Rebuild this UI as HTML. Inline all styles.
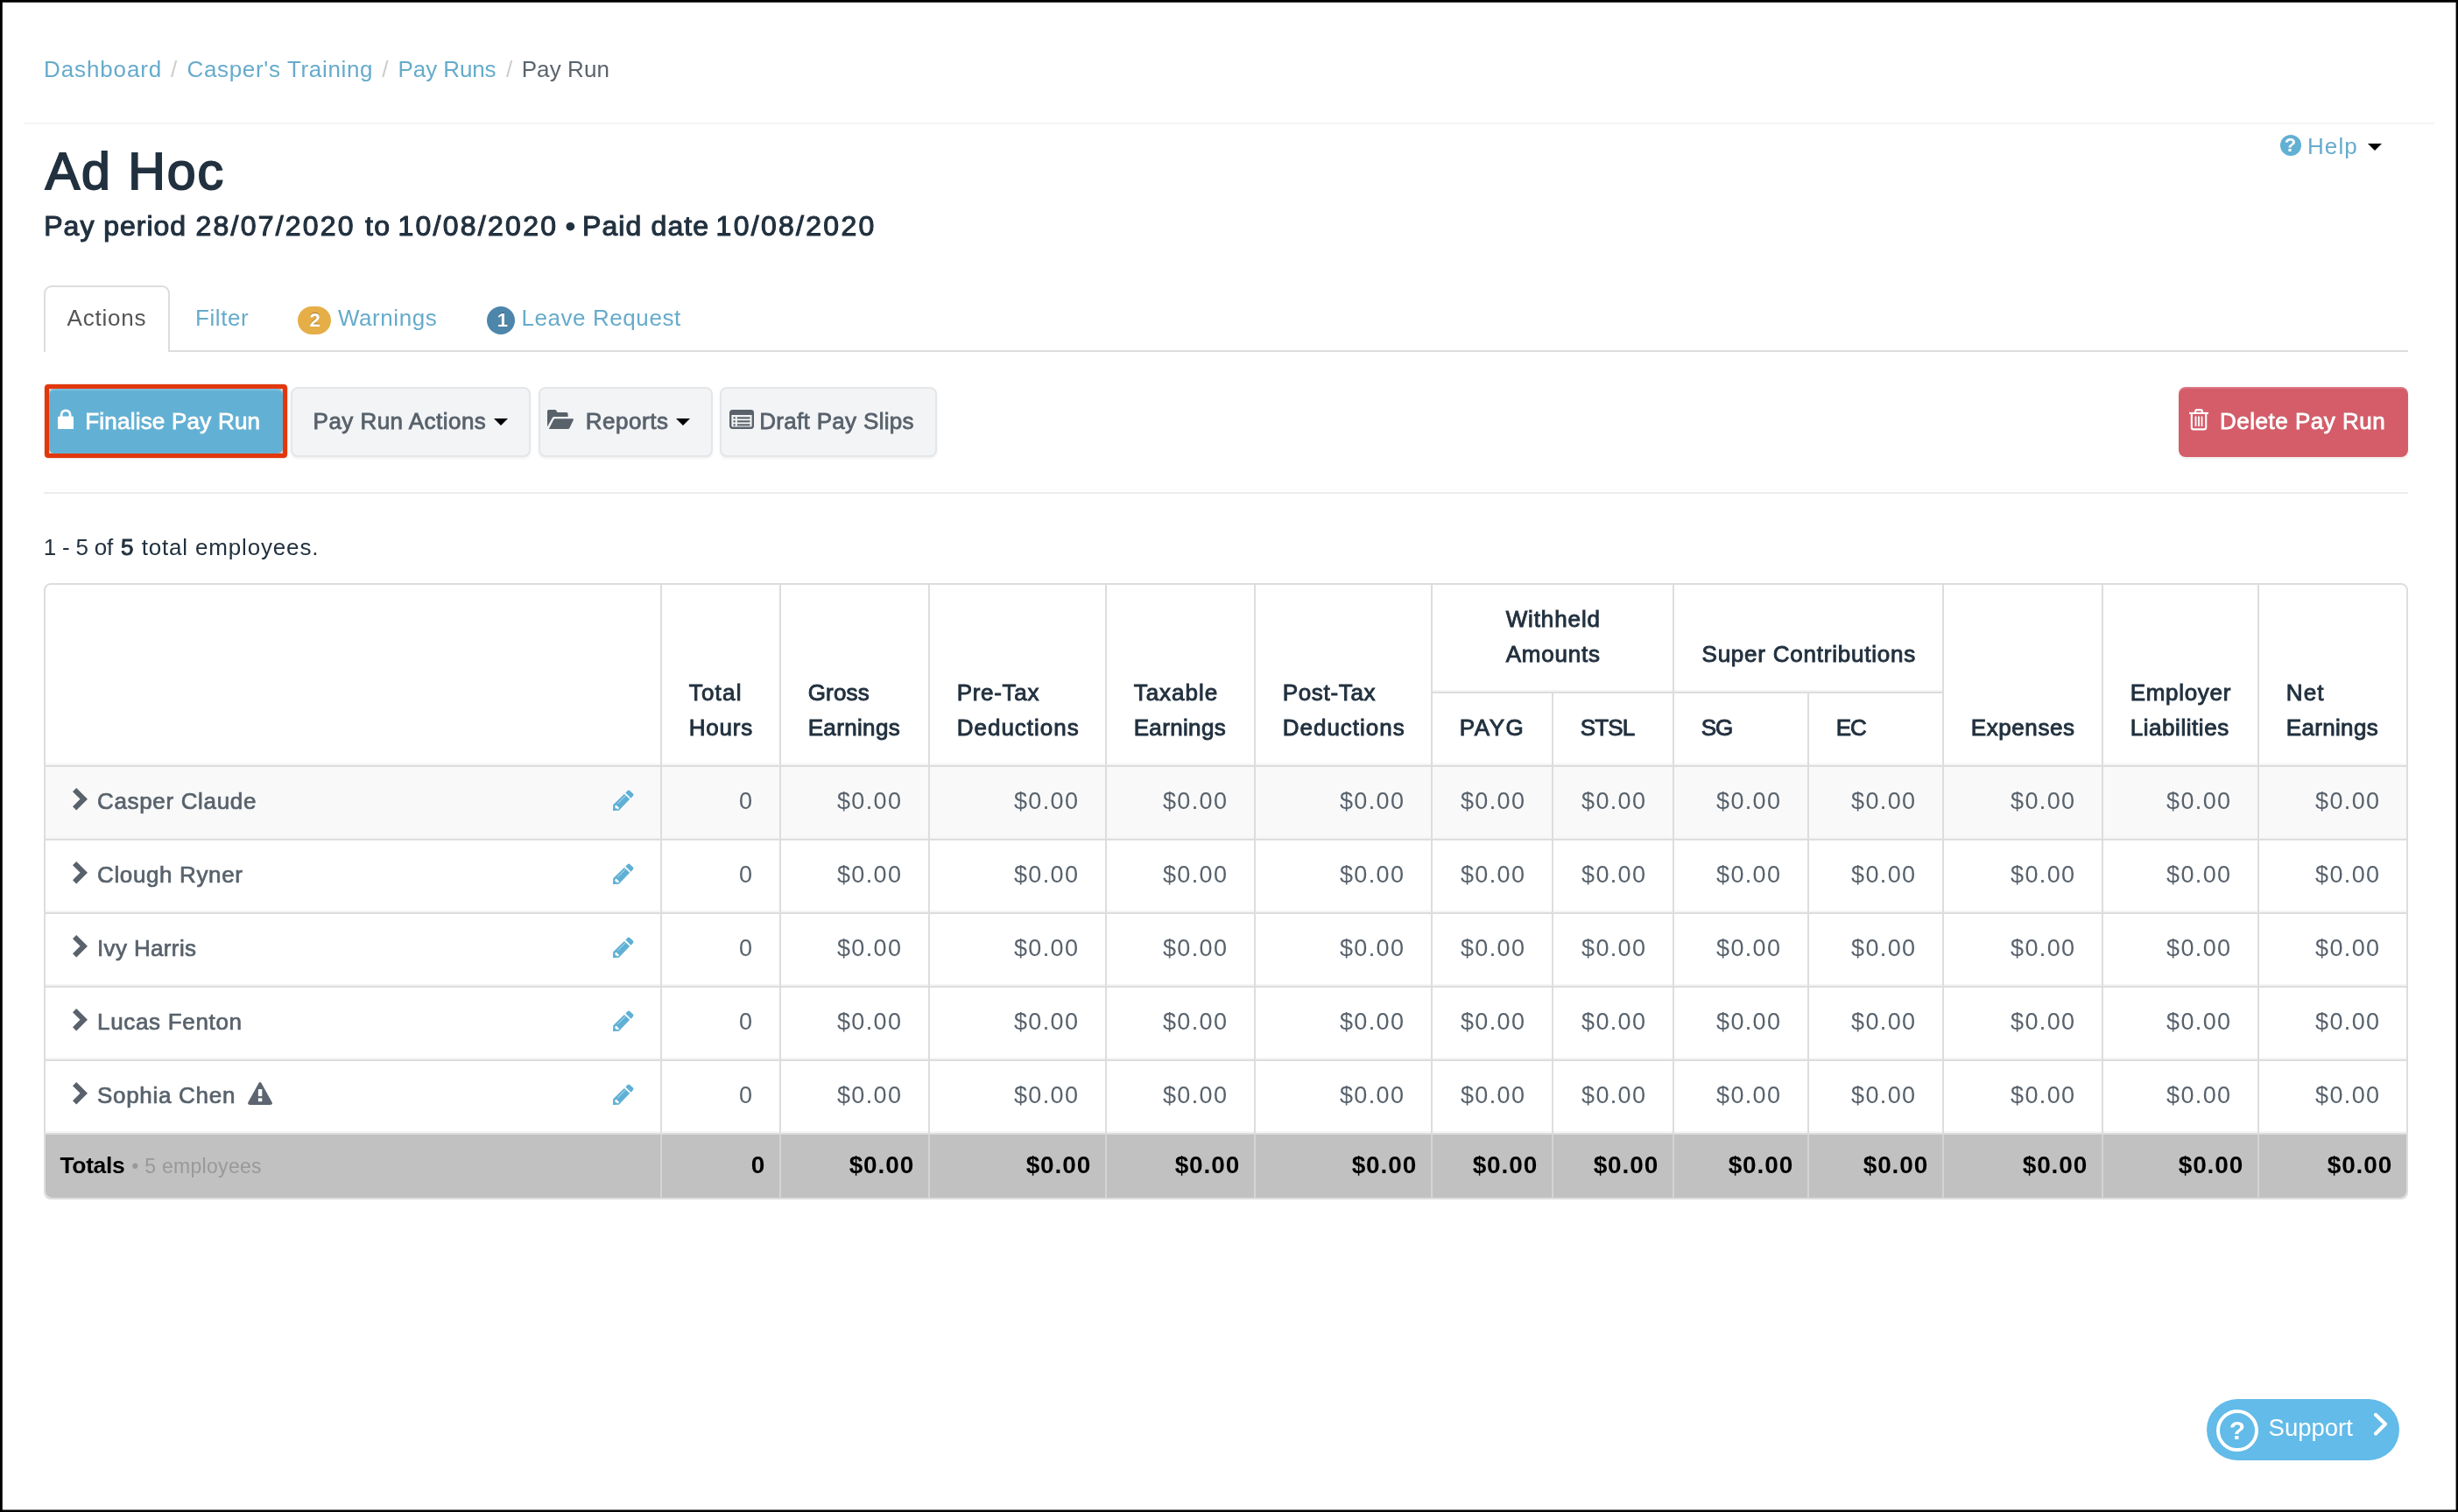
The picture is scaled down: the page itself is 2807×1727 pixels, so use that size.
<!DOCTYPE html>
<html lang="en">
<head>
<meta charset="utf-8">
<title>Pay Run - Ad Hoc</title>
<style>
*{box-sizing:border-box}
html,body{margin:0;padding:0}
body{width:2807px;height:1727px;overflow:hidden;background:#fff;position:relative;will-change:transform;
  font-family:"Liberation Sans",sans-serif;font-size:27px;line-height:40px;color:#58626c}
.frame{position:absolute;left:0;top:0;z-index:50}
a,.lk{color:#66abcb;text-decoration:none}
ul{list-style:none;margin:0;padding:0}
.abs{position:absolute;white-space:nowrap}
/* text classes */
.t{font-size:26px}
.sb{font-size:26px;-webkit-text-stroke:0.9px currentColor}
.b{font-size:26.5px;font-weight:bold}
.h1{font-size:59px;-webkit-text-stroke:1.9px currentColor}
.h2{font-size:32px;-webkit-text-stroke:1.1px currentColor}
.sm{font-size:23px}
.num{font-size:27px}
.bn{font-size:28px;font-weight:bold}
.bt{font-size:26px;-webkit-text-stroke:0.8px currentColor}
.nm{font-size:26px;-webkit-text-stroke:0.7px currentColor}
.bd{font-size:22px;font-weight:bold}
/* breadcrumb */
.breadcrumb{position:absolute;left:0;top:58.9px;height:40px}
.breadcrumb li{display:block}
.breadcrumb .sep{color:#ccc}
.breadcrumb .active{color:#5b646d}
.hr1{position:absolute;left:28px;top:140px;width:2752px;height:2px;background:#f3f4f6}
.help{position:absolute;left:0;top:146.7px;height:40px}
.qi{position:absolute;left:2603.5px;top:7.3px;width:24px;height:24px;border-radius:50%;background:#62b0d3;color:#fff;font-weight:bold;font-size:22px;line-height:24px;text-align:center}
.help .caret{position:absolute;left:2704px;top:17.4px}
.caret{position:absolute;left:101px;top:18px}
.caret{display:inline-block;width:0;height:0;border-left:8px solid transparent;border-right:8px solid transparent;border-top:8px solid #000}
h1{margin:0;left:0;top:160.1px;line-height:72px;font-weight:normal;color:#22313f}
h2{margin:0;left:0;top:238.3px;line-height:40px;font-weight:normal;color:#22313f}
/* tabs */
.tabline{position:absolute;left:50px;top:400px;width:2700px;height:2px;background:#ddd}
.tab-active{position:absolute;left:50px;top:326px;width:144px;height:76px;border:2px solid #ddd;border-bottom:0;border-radius:9px 9px 0 0;background:#fff}
.tabs{position:absolute;left:0;top:342.5px}
.tabs li{display:block}
.tabs .cur{color:#555}
.badge{position:absolute;top:7.1px;height:32.4px;border-radius:16.2px;color:#fff;text-shadow:0 -1px 0 rgba(0,0,0,.3)}
.badge span{top:-3.5px}
.badge.w{background:#e5ae47;left:339.8px;width:38.2px}
.badge.i{background:#4d86ab;left:556.2px;width:31.7px}
/* buttons */
.btn{position:absolute;top:442px;height:80px;border-radius:8px;white-space:nowrap}
.btnlbl{position:absolute;left:0;top:461.3px;height:40px}
.btnlbl .w{color:#fff;text-shadow:0 -1px 0 rgba(0,0,0,.18)}
.btnlbl .g{color:#58626c}
.btn-default{background:#f3f4f6;border:2px solid #e4e6e9;box-shadow:0 2px 3px rgba(0,0,0,.06);color:#555f69}
.btn-primary{background:#62b1d5;color:#fff;border-radius:6px;box-shadow:inset 0 2px 1px rgba(255,255,255,.16)}
.redbox{position:absolute;left:51px;top:439px;width:277.3px;height:83.5px;border:5px solid #e2370c;border-radius:4px;box-shadow:inset 0 0 0 1px rgba(150,50,30,.35),0 0 0 0.5px rgba(150,50,30,.3)}
.btn-danger{background:#d45d69;color:#fff;box-shadow:inset 0 2px 1px rgba(255,255,255,.16),0 2px 3px rgba(0,0,0,.08)}
.hr2{position:absolute;left:50px;top:562px;width:2700px;height:2px;background:#ededed}
.count{left:0;top:604.6px;color:#22313f;margin:0;height:40px}
.count b{font-weight:normal}
/* table */
table{position:absolute;left:50px;top:666px;width:2700px;border-collapse:separate;border-spacing:0;table-layout:fixed;
  border:2px solid #ddd;border-radius:8px;}
th,td{border-left:2px solid #ddd;border-top:2px solid #ddd;line-height:40px;font-weight:normal;white-space:nowrap;overflow:hidden}
thead tr:first-child th:first-child,td:first-child{border-left:0}
thead tr:first-child th{border-top:0}
th{text-align:left;vertical-align:bottom;color:#22313f;padding:0 30px 23.1px 30.7px}
th.c{text-align:center}
td{text-align:right;height:84px;vertical-align:top;padding:19.4px 31px 0 30px}
tbody td,th{box-shadow:inset 0 -2px 0 #f4f5f7}
td.n{text-align:left;position:relative;padding-left:59px}
tbody tr:first-child td{background:#f9f9f9}
tfoot td{background:#c1c1c1;color:#000;height:73.5px;padding:14.8px 16.7px 0 16.5px;border-top-color:#dcdcdc;border-left-color:#d4d4d4;box-shadow:none}
tfoot td.n{padding-left:16.5px}
tfoot td:first-child{border-bottom-left-radius:7px}
tfoot td:last-child{border-bottom-right-radius:7px}
.chev{position:absolute;left:31.1px;top:24.3px}
.pen{position:absolute;left:647.8px;top:26px}
.warn{position:absolute;left:231px;top:23.9px}
.muted{color:#999}
/* support */
.support{position:absolute;left:2520px;top:1598px;width:220px;height:70px;border-radius:35px;background:#62bbe8;color:#fff}
.support .lbl{position:absolute;left:0;top:13px}
.sp{font-size:27.5px}
.qs{position:absolute;left:11px;top:12px;width:48px;height:48px;border:4px solid #fff;border-radius:50%;color:#fff;font-weight:bold;font-size:30px;line-height:40px;text-align:center}
</style>
</head>
<body>
<svg class="frame" width="2807" height="1727" viewBox="0 0 2807 1727"><path fill="#000" fill-rule="evenodd" d="M0 0H2807V1727H0Z M2.8 2.7H2804.6V1724.6H2.8Z"/></svg>

<ul class="breadcrumb">
  <li><a><span class="t abs" style="left:50.0px;letter-spacing:0.88px">Dashboard</span></a><span class="sep"><span class="t abs" style="left:195.0px;letter-spacing:0.00px">/</span></span></li>
  <li><a><span class="t abs" style="left:213.5px;letter-spacing:0.66px">Casper's Training</span></a><span class="sep"><span class="t abs" style="left:436.3px;letter-spacing:0.00px">/</span></span></li>
  <li><a><span class="t abs" style="left:454.6px;letter-spacing:-0.10px">Pay Runs</span></a><span class="sep"><span class="t abs" style="left:577.9px;letter-spacing:0.00px">/</span></span></li>
  <li class="active"><span class="t abs" style="left:595.7px;letter-spacing:0.09px">Pay Run</span></li>
</ul>
<div class="hr1"></div>

<div class="help">
  <span class="qi">?</span>
  <a><span class="t abs" style="left:2634.9px;letter-spacing:1.13px">Help</span></a>
  <span class="caret"></span>
</div>

<h1 class="abs"><span class="h1 abs" style="left:51.8px;letter-spacing:1.94px">Ad Hoc</span></h1>
<h2 class="abs"><span class="h2 abs" style="left:50.3px;letter-spacing:0.98px">Pay period</span> <span class="h2 abs" style="left:223.5px;letter-spacing:2.22px">28/07/2020</span> <span class="h2 abs" style="left:416.9px;letter-spacing:1.51px">to</span> <span class="h2 abs" style="left:454.4px;letter-spacing:2.28px">10/08/2020</span> <span class="h2 abs" style="left:645.8px;letter-spacing:0.00px">•</span> <span class="h2 abs" style="left:665.0px;letter-spacing:1.11px">Paid date</span> <span class="h2 abs" style="left:817.6px;letter-spacing:2.28px">10/08/2020</span></h2>

<div class="tabline"></div>
<div class="tab-active"></div>
<ul class="tabs">
  <li class="cur"><span class="t abs" style="left:76.6px;letter-spacing:0.79px">Actions</span></li>
  <li><a><span class="t abs" style="left:223.0px;letter-spacing:0.58px">Filter</span></a></li>
  <li><span class="badge w"><span class="bd abs" style="left:13.7px;letter-spacing:0.00px">2</span></span><a><span class="t abs" style="left:385.9px;letter-spacing:0.58px">Warnings</span></a></li>
  <li><span class="badge i"><span class="bd abs" style="left:11.5px;letter-spacing:0.00px">1</span></span><a><span class="t abs" style="left:595.4px;letter-spacing:0.58px">Leave Request</span></a></li>
</ul>

<div class="redbox"></div>
<div class="btn btn-primary" style="left:56px;top:444px;width:267.3px;height:73.5px">
  <svg style="position:absolute;left:9.9px;top:22.5px" width="18.3" height="23.5" viewBox="0 0 18.3 23.5"><path d="M4.1 9V6.800a5 5 0 0 1 10 0V9" fill="none" stroke="#fff" stroke-width="2.800"/><rect x="0" y="8.500" width="18.3" height="15" rx="1.800" fill="#fff"/></svg>
</div>
<div class="btn btn-default" style="left:332.3px;width:273.4px">
  <span class="caret" style="position:absolute;left:230px;top:33.700px"></span>
</div>
<div class="btn btn-default" style="left:614.5px;width:199px">
  <svg style="position:absolute;left:8.600px;top:24px" width="30" height="22" viewBox="0 0 30 22"><path d="M0 19.500V1.800C0 .7.700 0 1.800 0H8.500c.9 0 1.400.3 1.800 1l1 1.700c.2.300.4.400.8.400h9.700c1.100 0 1.800.7 1.800 1.800V8H8.300C7 8 6.100 8.600 5.500 9.800z" fill="#59626b"/><path d="M1.800 22 7.300 11.300c.4-.8 1-1.100 1.900-1.100H28.800c1 0 1.400.6 1 1.500L25.600 20.400c-.5 1.100-1.300 1.600-2.500 1.600z" fill="#59626b"/></svg>
  <span class="caret" style="position:absolute;left:155.3px;top:33.700px"></span>
</div>
<div class="btn btn-default" style="left:822.2px;width:247.4px">
  <svg style="position:absolute;left:8.800px;top:24px" width="28" height="22" viewBox="0 0 28 22"><rect x="1.200" y="1.200" width="25.600" height="19.600" rx="2.200" fill="none" stroke="#59626b" stroke-width="2.400"/><rect x="1" y="1" width="26" height="5" fill="#59626b"/><g fill="#59626b"><rect x="4.500" y="8.300" width="2.300" height="2.100"/><rect x="8.800" y="8.300" width="14.700" height="2.100"/><rect x="4.500" y="12.300" width="2.300" height="2.100"/><rect x="8.800" y="12.300" width="14.700" height="2.100"/><rect x="4.500" y="16.300" width="2.300" height="2.100"/><rect x="8.800" y="16.300" width="14.700" height="2.100"/></g></svg>
</div>
<div class="btn btn-danger" style="left:2488px;width:262px;height:80px">
  <svg style="position:absolute;left:12.300px;top:25.300px" width="22" height="24.500" viewBox="0 0 22 24.500"><g fill="none" stroke="#fff" stroke-width="2.100"><path d="M7.200 4.500V2.600C7.200 1.700 7.800 1.100 8.700 1.100h4.600c.9 0 1.500.6 1.500 1.500V4.500"/><path d="M0 4.900H22"/><path d="M2.800 5.500V21.200c0 1.400.8 2.200 2.200 2.200H17c1.400 0 2.200-.8 2.200-2.200V5.500"/><path d="M7.500 8.500V20M11 8.500V20M14.500 8.500V20" stroke-width="1.800"/></g></svg>
</div>
<div class="btnlbl">
  <span class="w"><span class="bt abs" style="left:97.2px;letter-spacing:0.22px">Finalise Pay Run</span></span>
  <span class="g"><span class="bt abs" style="left:357.6px;letter-spacing:0.46px">Pay Run Actions</span></span>
  <span class="g"><span class="bt abs" style="left:668.7px;letter-spacing:0.53px">Reports</span></span>
  <span class="g"><span class="bt abs" style="left:867.2px;letter-spacing:0.32px">Draft Pay Slips</span></span>
  <span class="w"><span class="bt abs" style="left:2534.9px;letter-spacing:0.52px">Delete Pay Run</span></span>
</div>
<div class="hr2"></div>

<p class="count abs"><span class="t abs" style="left:49.8px;letter-spacing:-0.23px">1 - 5 of</span><b><span class="sb abs" style="left:138.0px;letter-spacing:0.00px">5</span></b><span class="t abs" style="left:161.7px;letter-spacing:0.83px">total employees.</span></p>

<table>
  <colgroup><col style="width:702px"><col style="width:136px"><col style="width:170px"><col style="width:202px"><col style="width:170px"><col style="width:202px"><col style="width:138px"><col style="width:138px"><col style="width:154px"><col style="width:154px"><col style="width:182px"><col style="width:178px"><col style="width:170px"></colgroup>
  <thead>
    <tr style="height:122px">
      <th rowspan="2"></th>
      <th rowspan="2"><span class="sb" style="letter-spacing:1.21px;margin-right:-1.21px">Total</span><br><span class="sb" style="letter-spacing:0.79px;margin-right:-0.79px">Hours</span></th>
      <th rowspan="2"><span class="sb" style="letter-spacing:0.16px;margin-right:-0.16px">Gross</span><br><span class="sb" style="letter-spacing:0.34px;margin-right:-0.34px">Earnings</span></th>
      <th rowspan="2"><span class="sb" style="letter-spacing:0.70px;margin-right:-0.70px">Pre-Tax</span><br><span class="sb" style="letter-spacing:1.00px;margin-right:-1.00px">Deductions</span></th>
      <th rowspan="2"><span class="sb" style="letter-spacing:0.97px;margin-right:-0.97px">Taxable</span><br><span class="sb" style="letter-spacing:0.34px;margin-right:-0.34px">Earnings</span></th>
      <th rowspan="2"><span class="sb" style="letter-spacing:0.68px;margin-right:-0.68px">Post-Tax</span><br><span class="sb" style="letter-spacing:1.00px;margin-right:-1.00px">Deductions</span></th>
      <th colspan="2" class="c"><span class="sb" style="letter-spacing:0.89px;margin-right:-0.89px">Withheld</span><br><span class="sb" style="letter-spacing:0.80px;margin-right:-0.80px">Amounts</span></th>
      <th colspan="2" class="c"><span class="sb" style="letter-spacing:0.77px;margin-right:-0.77px">Super Contributions</span></th>
      <th rowspan="2"><span class="sb" style="letter-spacing:0.59px;margin-right:-0.59px">Expenses</span></th>
      <th rowspan="2"><span class="sb" style="letter-spacing:0.68px;margin-right:-0.68px">Employer</span><br><span class="sb" style="letter-spacing:0.55px;margin-right:-0.55px">Liabilities</span></th>
      <th rowspan="2"><span class="sb" style="letter-spacing:1.13px;margin-right:-1.13px">Net</span><br><span class="sb" style="letter-spacing:0.34px;margin-right:-0.34px">Earnings</span></th>
    </tr>
    <tr style="height:84px">
      <th><span class="sb" style="letter-spacing:1.58px;margin-right:-1.58px">PAYG</span></th><th><span class="sb" style="letter-spacing:-0.82px;margin-right:0.82px">STSL</span></th><th><span class="sb" style="letter-spacing:-0.94px;margin-right:0.94px">SG</span></th><th><span class="sb" style="letter-spacing:-1.14px;margin-right:1.14px">EC</span></th>
    </tr>
  </thead>
  <tbody>
    <tr><td class="n"><svg class="chev" width="17" height="26" viewBox="0 0 17 26"><path d="M2.12 2.12 12.76 12.7 2.12 23.28" fill="none" stroke="#59626b" stroke-width="6" stroke-linejoin="miter"/></svg><svg class="pen" width="24" height="24" viewBox="0 0 24 24"><path d="M0 24 .2 17.3 12.9 5 19.2 10.7 6.75 23.8Z" fill="#5fb0d4"/><path d="M14.3 3.6 16.9 1Q18 0 19.1 1L23 4.6Q24 5.75 23 6.9L20.6 9.7Z" fill="#5fb0d4"/><path d="M14.1 7.1 5.4 15.7" stroke="#c4e9f8" stroke-width=".9" fill="none"/><path d="M2 19.2 3.6 17.6 7.2 20.9 5.4 22.4 4.2 21.2 3.5 21.8Z" fill="#fff"/></svg><span class="nm" style="letter-spacing:0.66px;margin-right:-0.66px">Casper Claude</span></td><td><span class="num" style="letter-spacing:0.00px">0</span></td><td><span class="num" style="letter-spacing:1.36px;margin-right:-1.36px">$0.00</span></td><td><span class="num" style="letter-spacing:1.36px;margin-right:-1.36px">$0.00</span></td><td><span class="num" style="letter-spacing:1.36px;margin-right:-1.36px">$0.00</span></td><td><span class="num" style="letter-spacing:1.36px;margin-right:-1.36px">$0.00</span></td><td><span class="num" style="letter-spacing:1.36px;margin-right:-1.36px">$0.00</span></td><td><span class="num" style="letter-spacing:1.36px;margin-right:-1.36px">$0.00</span></td><td><span class="num" style="letter-spacing:1.36px;margin-right:-1.36px">$0.00</span></td><td><span class="num" style="letter-spacing:1.36px;margin-right:-1.36px">$0.00</span></td><td><span class="num" style="letter-spacing:1.36px;margin-right:-1.36px">$0.00</span></td><td><span class="num" style="letter-spacing:1.36px;margin-right:-1.36px">$0.00</span></td><td><span class="num" style="letter-spacing:1.36px;margin-right:-1.36px">$0.00</span></td></tr>
    <tr><td class="n"><svg class="chev" width="17" height="26" viewBox="0 0 17 26"><path d="M2.12 2.12 12.76 12.7 2.12 23.28" fill="none" stroke="#59626b" stroke-width="6" stroke-linejoin="miter"/></svg><svg class="pen" width="24" height="24" viewBox="0 0 24 24"><path d="M0 24 .2 17.3 12.9 5 19.2 10.7 6.75 23.8Z" fill="#5fb0d4"/><path d="M14.3 3.6 16.9 1Q18 0 19.1 1L23 4.6Q24 5.75 23 6.9L20.6 9.7Z" fill="#5fb0d4"/><path d="M14.1 7.1 5.4 15.7" stroke="#c4e9f8" stroke-width=".9" fill="none"/><path d="M2 19.2 3.6 17.6 7.2 20.9 5.4 22.4 4.2 21.2 3.5 21.8Z" fill="#fff"/></svg><span class="nm" style="letter-spacing:0.63px;margin-right:-0.63px">Clough Ryner</span></td><td><span class="num" style="letter-spacing:0.00px">0</span></td><td><span class="num" style="letter-spacing:1.36px;margin-right:-1.36px">$0.00</span></td><td><span class="num" style="letter-spacing:1.36px;margin-right:-1.36px">$0.00</span></td><td><span class="num" style="letter-spacing:1.36px;margin-right:-1.36px">$0.00</span></td><td><span class="num" style="letter-spacing:1.36px;margin-right:-1.36px">$0.00</span></td><td><span class="num" style="letter-spacing:1.36px;margin-right:-1.36px">$0.00</span></td><td><span class="num" style="letter-spacing:1.36px;margin-right:-1.36px">$0.00</span></td><td><span class="num" style="letter-spacing:1.36px;margin-right:-1.36px">$0.00</span></td><td><span class="num" style="letter-spacing:1.36px;margin-right:-1.36px">$0.00</span></td><td><span class="num" style="letter-spacing:1.36px;margin-right:-1.36px">$0.00</span></td><td><span class="num" style="letter-spacing:1.36px;margin-right:-1.36px">$0.00</span></td><td><span class="num" style="letter-spacing:1.36px;margin-right:-1.36px">$0.00</span></td></tr>
    <tr><td class="n"><svg class="chev" width="17" height="26" viewBox="0 0 17 26"><path d="M2.12 2.12 12.76 12.7 2.12 23.28" fill="none" stroke="#59626b" stroke-width="6" stroke-linejoin="miter"/></svg><svg class="pen" width="24" height="24" viewBox="0 0 24 24"><path d="M0 24 .2 17.3 12.9 5 19.2 10.7 6.75 23.8Z" fill="#5fb0d4"/><path d="M14.3 3.6 16.9 1Q18 0 19.1 1L23 4.6Q24 5.75 23 6.9L20.6 9.7Z" fill="#5fb0d4"/><path d="M14.1 7.1 5.4 15.7" stroke="#c4e9f8" stroke-width=".9" fill="none"/><path d="M2 19.2 3.6 17.6 7.2 20.9 5.4 22.4 4.2 21.2 3.5 21.8Z" fill="#fff"/></svg><span class="nm" style="letter-spacing:0.36px;margin-right:-0.36px">Ivy Harris</span></td><td><span class="num" style="letter-spacing:0.00px">0</span></td><td><span class="num" style="letter-spacing:1.36px;margin-right:-1.36px">$0.00</span></td><td><span class="num" style="letter-spacing:1.36px;margin-right:-1.36px">$0.00</span></td><td><span class="num" style="letter-spacing:1.36px;margin-right:-1.36px">$0.00</span></td><td><span class="num" style="letter-spacing:1.36px;margin-right:-1.36px">$0.00</span></td><td><span class="num" style="letter-spacing:1.36px;margin-right:-1.36px">$0.00</span></td><td><span class="num" style="letter-spacing:1.36px;margin-right:-1.36px">$0.00</span></td><td><span class="num" style="letter-spacing:1.36px;margin-right:-1.36px">$0.00</span></td><td><span class="num" style="letter-spacing:1.36px;margin-right:-1.36px">$0.00</span></td><td><span class="num" style="letter-spacing:1.36px;margin-right:-1.36px">$0.00</span></td><td><span class="num" style="letter-spacing:1.36px;margin-right:-1.36px">$0.00</span></td><td><span class="num" style="letter-spacing:1.36px;margin-right:-1.36px">$0.00</span></td></tr>
    <tr><td class="n"><svg class="chev" width="17" height="26" viewBox="0 0 17 26"><path d="M2.12 2.12 12.76 12.7 2.12 23.28" fill="none" stroke="#59626b" stroke-width="6" stroke-linejoin="miter"/></svg><svg class="pen" width="24" height="24" viewBox="0 0 24 24"><path d="M0 24 .2 17.3 12.9 5 19.2 10.7 6.75 23.8Z" fill="#5fb0d4"/><path d="M14.3 3.6 16.9 1Q18 0 19.1 1L23 4.6Q24 5.75 23 6.9L20.6 9.7Z" fill="#5fb0d4"/><path d="M14.1 7.1 5.4 15.7" stroke="#c4e9f8" stroke-width=".9" fill="none"/><path d="M2 19.2 3.6 17.6 7.2 20.9 5.4 22.4 4.2 21.2 3.5 21.8Z" fill="#fff"/></svg><span class="nm" style="letter-spacing:0.68px;margin-right:-0.68px">Lucas Fenton</span></td><td><span class="num" style="letter-spacing:0.00px">0</span></td><td><span class="num" style="letter-spacing:1.36px;margin-right:-1.36px">$0.00</span></td><td><span class="num" style="letter-spacing:1.36px;margin-right:-1.36px">$0.00</span></td><td><span class="num" style="letter-spacing:1.36px;margin-right:-1.36px">$0.00</span></td><td><span class="num" style="letter-spacing:1.36px;margin-right:-1.36px">$0.00</span></td><td><span class="num" style="letter-spacing:1.36px;margin-right:-1.36px">$0.00</span></td><td><span class="num" style="letter-spacing:1.36px;margin-right:-1.36px">$0.00</span></td><td><span class="num" style="letter-spacing:1.36px;margin-right:-1.36px">$0.00</span></td><td><span class="num" style="letter-spacing:1.36px;margin-right:-1.36px">$0.00</span></td><td><span class="num" style="letter-spacing:1.36px;margin-right:-1.36px">$0.00</span></td><td><span class="num" style="letter-spacing:1.36px;margin-right:-1.36px">$0.00</span></td><td><span class="num" style="letter-spacing:1.36px;margin-right:-1.36px">$0.00</span></td></tr>
    <tr><td class="n"><svg class="chev" width="17" height="26" viewBox="0 0 17 26"><path d="M2.12 2.12 12.76 12.7 2.12 23.28" fill="none" stroke="#59626b" stroke-width="6" stroke-linejoin="miter"/></svg><svg class="pen" width="24" height="24" viewBox="0 0 24 24"><path d="M0 24 .2 17.3 12.9 5 19.2 10.7 6.75 23.8Z" fill="#5fb0d4"/><path d="M14.3 3.6 16.9 1Q18 0 19.1 1L23 4.6Q24 5.75 23 6.9L20.6 9.7Z" fill="#5fb0d4"/><path d="M14.1 7.1 5.4 15.7" stroke="#c4e9f8" stroke-width=".9" fill="none"/><path d="M2 19.2 3.6 17.6 7.2 20.9 5.4 22.4 4.2 21.2 3.5 21.8Z" fill="#fff"/></svg><span class="nm" style="letter-spacing:0.70px;margin-right:-0.70px">Sophia Chen</span><svg class="warn" width="28" height="26" viewBox="0 0 28 26"><path d="M12.4 1.3Q14 -1.2 15.6 1.3L27.5 22.8Q28.8 26 25.500 26H2.5Q-.8 26 .5 22.800Z" fill="#5d6670"/><rect x="11.9" y="8.1" width="4.4" height="8" fill="#fff"/><rect x="11.9" y="18.3" width="4.4" height="3.900" fill="#fff"/></svg></td><td><span class="num" style="letter-spacing:0.00px">0</span></td><td><span class="num" style="letter-spacing:1.36px;margin-right:-1.36px">$0.00</span></td><td><span class="num" style="letter-spacing:1.36px;margin-right:-1.36px">$0.00</span></td><td><span class="num" style="letter-spacing:1.36px;margin-right:-1.36px">$0.00</span></td><td><span class="num" style="letter-spacing:1.36px;margin-right:-1.36px">$0.00</span></td><td><span class="num" style="letter-spacing:1.36px;margin-right:-1.36px">$0.00</span></td><td><span class="num" style="letter-spacing:1.36px;margin-right:-1.36px">$0.00</span></td><td><span class="num" style="letter-spacing:1.36px;margin-right:-1.36px">$0.00</span></td><td><span class="num" style="letter-spacing:1.36px;margin-right:-1.36px">$0.00</span></td><td><span class="num" style="letter-spacing:1.36px;margin-right:-1.36px">$0.00</span></td><td><span class="num" style="letter-spacing:1.36px;margin-right:-1.36px">$0.00</span></td><td><span class="num" style="letter-spacing:1.36px;margin-right:-1.36px">$0.00</span></td></tr>
  </tbody>
  <tfoot>
    <tr><td class="n"><span class="b" style="letter-spacing:-0.39px;margin-right:0.39px">Totals</span> <span class="muted sm"><span class="sm" style="letter-spacing:0.30px;margin-right:-0.30px">• 5 employees</span></span></td><td><span class="bn" style="letter-spacing:0.00px">0</span></td><td><span class="bn" style="letter-spacing:0.90px;margin-right:-0.90px">$0.00</span></td><td><span class="bn" style="letter-spacing:0.90px;margin-right:-0.90px">$0.00</span></td><td><span class="bn" style="letter-spacing:0.90px;margin-right:-0.90px">$0.00</span></td><td><span class="bn" style="letter-spacing:0.90px;margin-right:-0.90px">$0.00</span></td><td><span class="bn" style="letter-spacing:0.90px;margin-right:-0.90px">$0.00</span></td><td><span class="bn" style="letter-spacing:0.90px;margin-right:-0.90px">$0.00</span></td><td><span class="bn" style="letter-spacing:0.90px;margin-right:-0.90px">$0.00</span></td><td><span class="bn" style="letter-spacing:0.90px;margin-right:-0.90px">$0.00</span></td><td><span class="bn" style="letter-spacing:0.90px;margin-right:-0.90px">$0.00</span></td><td><span class="bn" style="letter-spacing:0.90px;margin-right:-0.90px">$0.00</span></td><td><span class="bn" style="letter-spacing:0.90px;margin-right:-0.90px">$0.00</span></td></tr>
  </tfoot>
</table>

<div class="support">
  <span class="qs">?</span>
  <span class="lbl"><span class="sp abs" style="left:70.6px;letter-spacing:-0.01px">Support</span></span>
  <svg style="position:absolute;left:189.7px;top:14.5px" width="18" height="28" viewBox="0 0 18 28"><path d="M3 3 14 13.500 3 24.500" fill="none" stroke="#fff" stroke-width="4.200" stroke-linecap="round" stroke-linejoin="round"/></svg>
</div>
</body>
</html>
